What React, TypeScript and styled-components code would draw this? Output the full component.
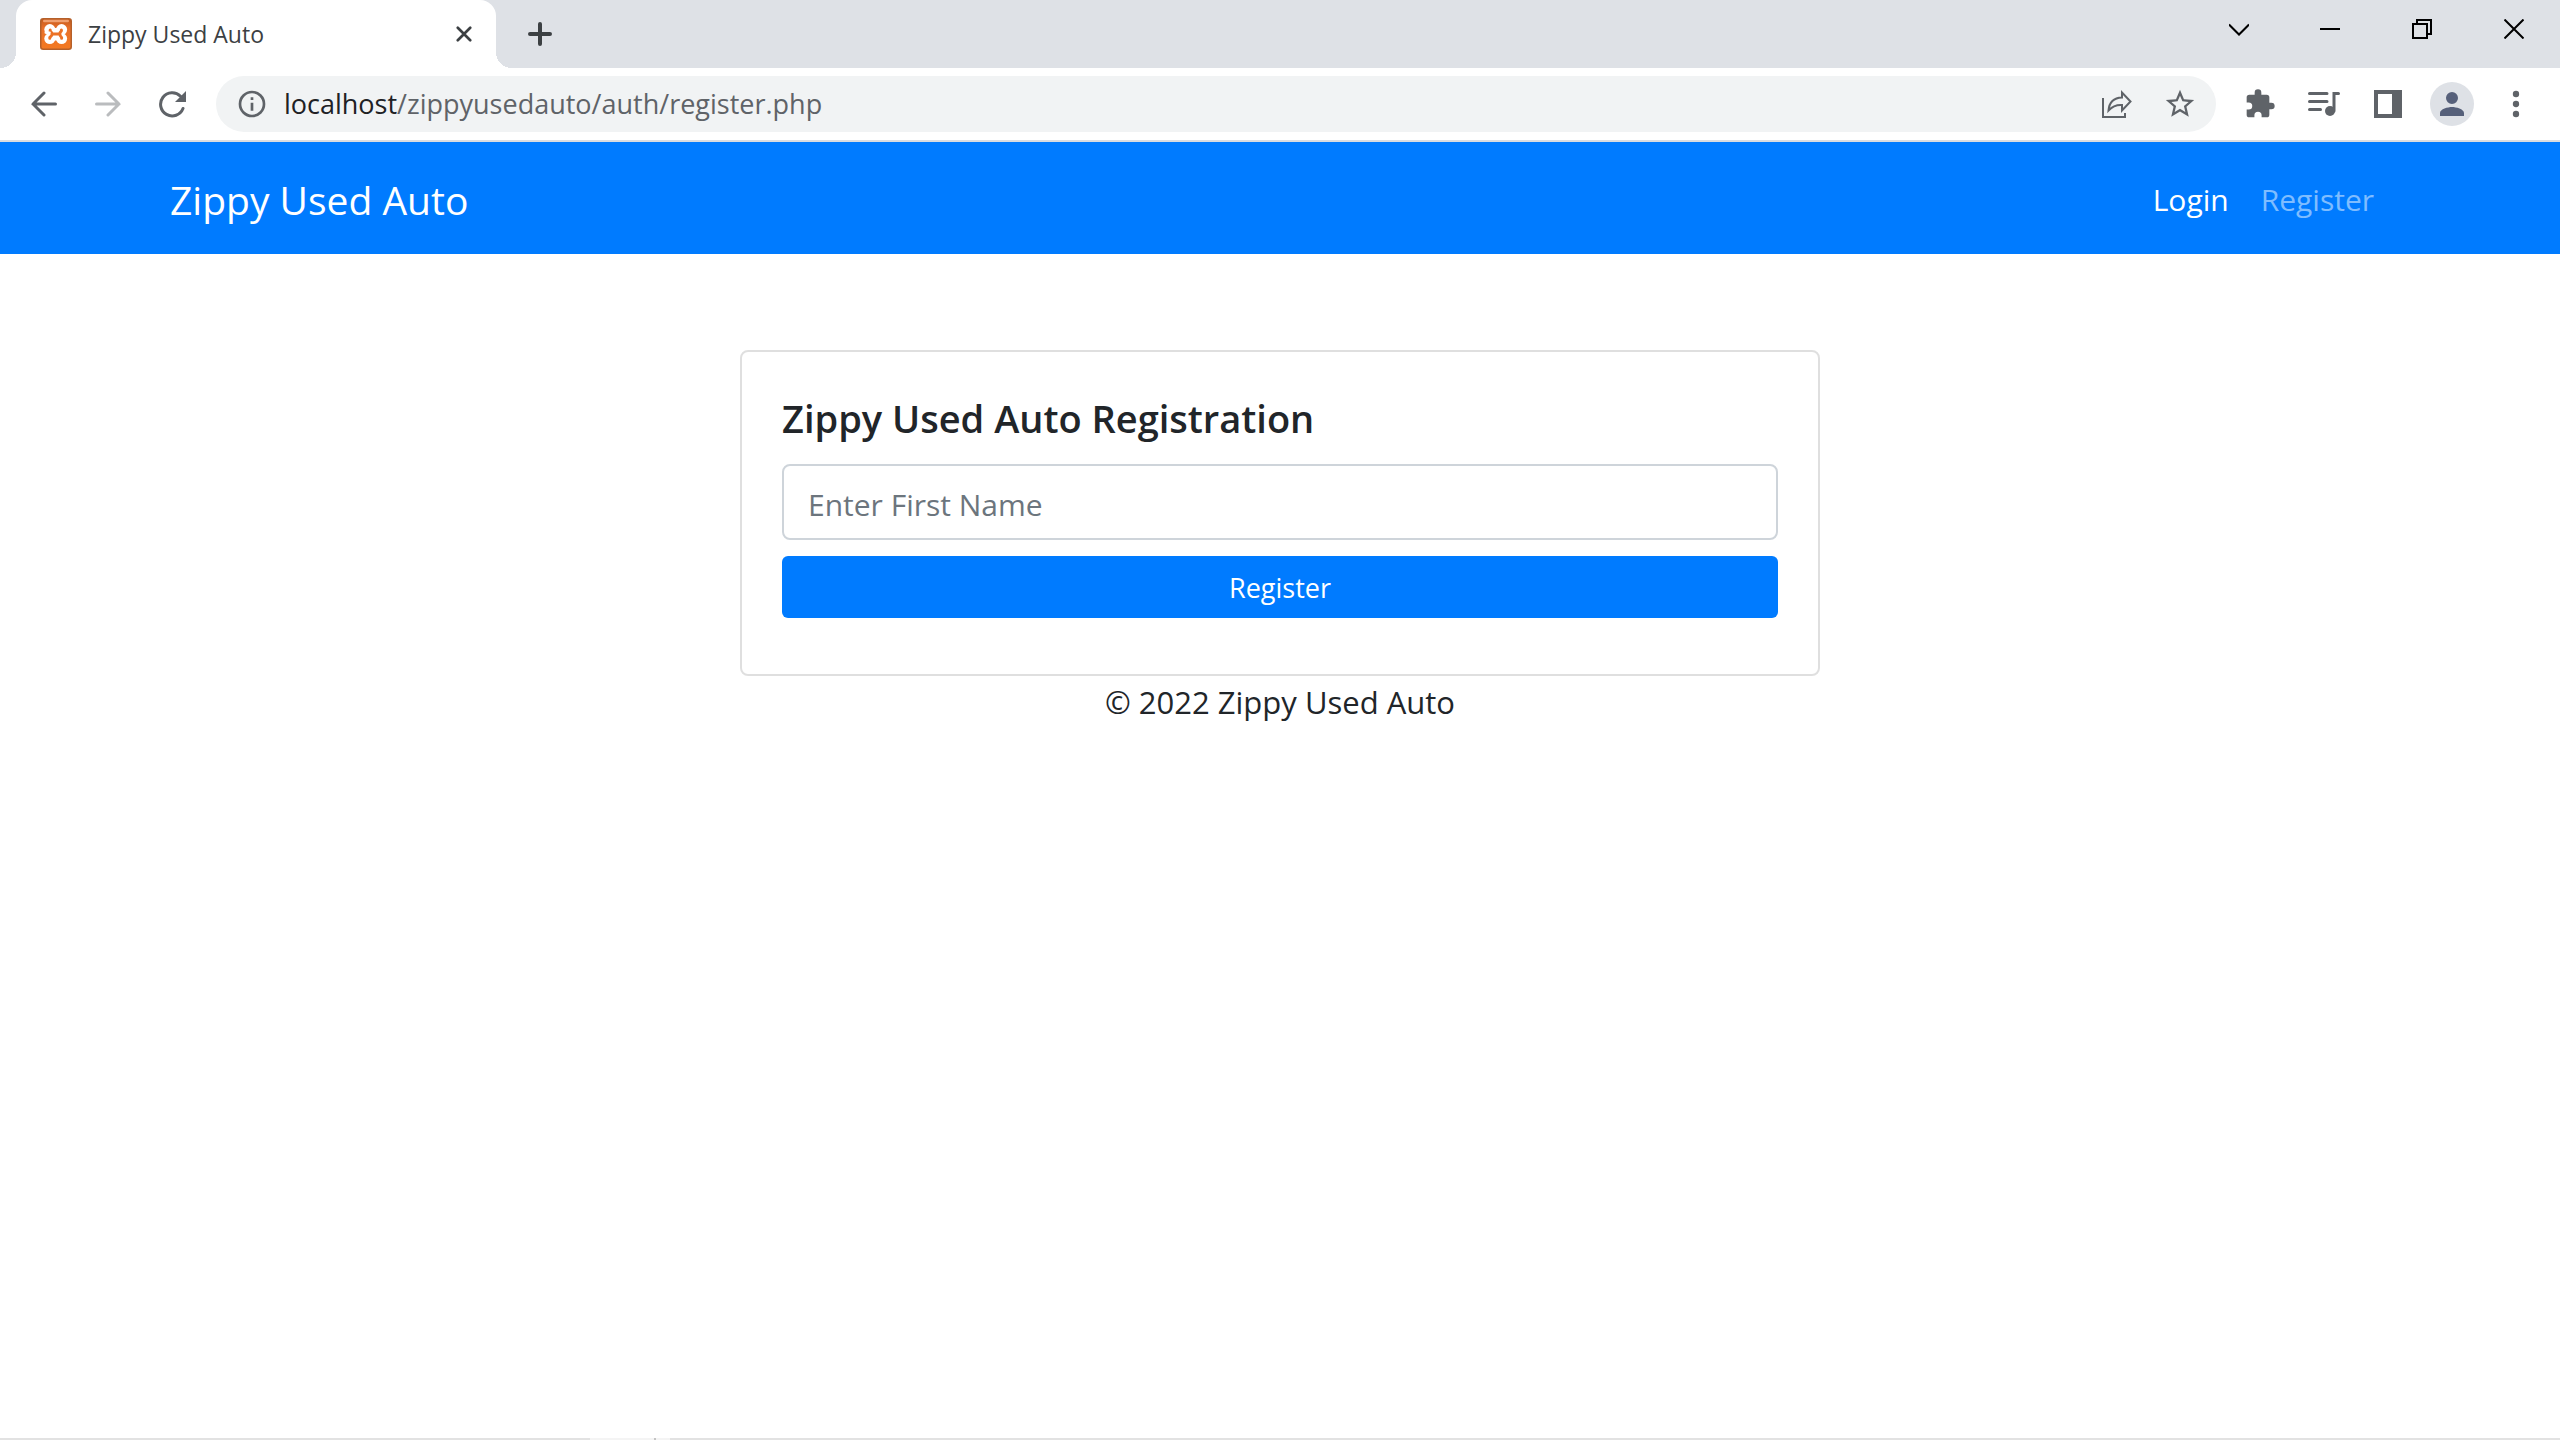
import React from "react";
import styled, { createGlobalStyle } from "styled-components";

const GlobalStyle = createGlobalStyle`
  *, *::before, *::after { box-sizing: border-box; }
  body { margin: 0; background: #fff; color: #212529; font-family: "Open Sans", "Noto Sans", sans-serif; }
  button, input { font: inherit; color: inherit; margin: 0; }
  button { background: none; border: 0; padding: 0; }
  a { color: inherit; text-decoration: none; }
  svg { display: block; }
`;

const Window = styled.div`
  display: flex;
  flex-direction: column;
  min-height: 100vh;
`;

const TabStrip = styled.div`
  display: flex;
  align-items: stretch;
  height: 68px;
  padding-left: 16px;
  background: #dee1e6;
`;

const Tab = styled.div`
  position: relative;
  display: flex;
  align-items: center;
  width: 480px;
  padding: 0 24px;
  gap: 16px;
  background: #fff;
  border-radius: 16px 16px 0 0;
  font-size: 23px;
  color: #3c4043;

  &::before,
  &::after {
    content: "";
    position: absolute;
    bottom: 0;
    width: 16px;
    height: 16px;
  }
  &::before {
    right: 100%;
    background: radial-gradient(circle at 0 0, transparent 16px, #fff 16px);
  }
  &::after {
    left: 100%;
    background: radial-gradient(circle at 100% 0, transparent 16px, #fff 16px);
  }
`;

const TabTitle = styled.span`
  flex: 1;
  line-height: 32px;
`;

const IconButton = styled.button<{ $width?: number; $color?: string }>`
  display: flex;
  align-items: center;
  justify-content: center;
  width: ${(p) => p.$width ?? 64}px;
  color: ${(p) => p.$color ?? "#5f6368"};
`;

const WindowControls = styled.div`
  display: flex;
  height: 58px;
  margin-left: auto;
`;

const Toolbar = styled.div`
  display: flex;
  height: 74px;
  padding: 0 12px;
  background: #fff;
  border-bottom: 2px solid #dadce0;
`;

const AddressBar = styled.div`
  flex: 1;
  display: flex;
  align-items: stretch;
  margin: 8px 12px;
  padding-left: 20px;
  padding-right: 4px;
  border-radius: 28px;
  background: #f1f3f4;
`;

const Url = styled.div`
  flex: 1;
  padding-left: 16px;
  font-size: 27px;
  line-height: 56px;
  color: #5f6368;
`;

const Host = styled.span`
  color: #202124;
`;

const Avatar = styled.span`
  display: flex;
  align-items: center;
  justify-content: center;
  width: 44px;
  height: 44px;
  border-radius: 50%;
  background: #dee1e6;
  color: #56607a;
`;

const Navbar = styled.nav`
  display: flex;
  align-items: center;
  justify-content: space-between;
  height: 112px;
  padding: 4px 170px 0;
  background: #007bff;
  color: #fff;
`;

const Brand = styled.a`
  font-size: 39px;
  line-height: 60px;
`;

const NavLinks = styled.div`
  display: flex;
`;

const NavLink = styled.a<{ $muted?: boolean }>`
  padding: 0 16px;
  font-size: 30px;
  line-height: 48px;
  color: ${(p) => (p.$muted ? "rgba(255, 255, 255, 0.5)" : "#fff")};
`;

const Main = styled.main`
  display: flex;
  flex: 1;
  flex-direction: column;
  align-items: center;
  padding-top: 96px;
`;

const Card = styled.form`
  display: flex;
  flex-direction: column;
  width: 1080px;
  max-width: 100%;
  padding: 40px 40px 56px;
  border: 2px solid rgba(0, 0, 0, 0.125);
  border-radius: 8px;
`;

const CardTitle = styled.h1`
  margin: 0 0 20px;
  font-size: 38px;
  font-weight: 600;
  line-height: 52px;
`;

const TextField = styled.input`
  height: 76px;
  padding: 4px 24px 0;
  border: 2px solid #ced4da;
  border-radius: 8px;
  background: #fff;
  font-size: 30px;
  outline: none;

  &::placeholder {
    color: #6c757d;
    opacity: 1;
  }
`;

const SubmitButton = styled.button`
  height: 62px;
  margin-top: 16px;
  border-radius: 6px;
  background: #007bff;
  color: #fff;
  font-size: 27px;
`;

const Footer = styled.footer`
  padding-top: 2px;
  font-size: 31px;
  line-height: 48px;
`;

const TaskbarEdge = styled.div`
  display: flex;
  height: 2px;
  padding-left: 590px;
  background: #e2e2e2;
`;

const ActiveTask = styled.div`
  width: 80px;
  padding-left: 64px;
  background: #f4f4f4;
`;

const TaskDivider = styled.div`
  width: 2px;
  height: 2px;
  background: #c4c4c4;
`;

const Favicon = () => (
  <svg width="32" height="32" viewBox="0 0 32 32" aria-hidden="true">
    <defs>
      <linearGradient id="tile" x1="0" y1="0" x2="0" y2="1">
        <stop offset="0" stopColor="#c4591c" />
        <stop offset="0.3" stopColor="#e8702a" />
        <stop offset="1" stopColor="#f47a22" />
      </linearGradient>
    </defs>
    <rect x="0.75" y="0.75" width="30.5" height="30.5" rx="2.5" fill="url(#tile)" stroke="#b5602a" strokeWidth="1.5" />
    <rect x="3" y="1.8" width="26" height="2.4" rx="1.2" fill="#f0a070" />
    <g fill="#fff">
      <circle cx="9.8" cy="11.6" r="5.5" />
      <circle cx="21.6" cy="11.6" r="5.5" />
      <circle cx="9.8" cy="20.6" r="5.5" />
      <circle cx="21.6" cy="20.6" r="5.5" />
      <rect x="10" y="10" width="12" height="12.5" />
    </g>
    <path
      d="M10.200 12v1.200q2 1.300 2 2.900t-2.400 3.400v.8M21.400 12v.8q-1.600 1.500-1.600 3.300t1.800 3.400v.8M12 16.100h8"
      fill="none"
      stroke="#ec7226"
      strokeWidth="3"
      strokeLinecap="round"
      strokeLinejoin="round"
    />
    <path d="M5.500 14.800l4.300-.2" stroke="#fff" strokeWidth="2" strokeLinecap="round" />
  </svg>
);

const Glyph = ({ size = 32, children }: { size?: number; children: React.ReactNode }) => (
  <svg width={size} height={size} viewBox="0 0 24 24" fill="currentColor" aria-hidden="true">
    {children}
  </svg>
);

type LinesProps = { size: number; width?: number; round?: boolean; d: string; children?: React.ReactNode };

const Lines = ({ size, width = 2, round, d, children }: LinesProps) => (
  <svg
    width={size}
    height={size}
    viewBox={`0 0 ${size} ${size}`}
    fill="none"
    stroke="currentColor"
    strokeWidth={width}
    strokeLinecap={round ? "round" : "butt"}
    aria-hidden="true"
  >
    <path d={d} />
    {children}
  </svg>
);

export default function App() {
  return (
    <Window>
      <GlobalStyle />
      <TabStrip>
        <Tab>
          <Favicon />
          <TabTitle>Zippy Used Auto</TabTitle>
          <IconButton $width={16} $color="#3c4043" aria-label="Close tab">
            <Lines size={18} width={3} round d="M2 2l14 14M16 2L2 16" />
          </IconButton>
        </Tab>
        <IconButton $width={88} $color="#3c4043" aria-label="New tab">
          <Lines size={24} width={4} round d="M12 2v20M2 12h20" />
        </IconButton>
        <WindowControls>
          <IconButton $width={90} $color="#000" aria-label="Search tabs">
            <Lines size={20} d="M0 5.500l10 10l10-10" />
          </IconButton>
          <IconButton $width={92} $color="#000" aria-label="Minimize">
            <Lines size={20} d="M0 10h20" />
          </IconButton>
          <IconButton $width={92} $color="#000" aria-label="Restore">
            <Lines size={20} d="M1 5h14v14H1zM5 5V1h14v14h-4" />
          </IconButton>
          <IconButton $width={92} $color="#000" aria-label="Close window">
            <Lines size={20} d="M.5.5l19 19M19.500.5l-19 19" />
          </IconButton>
        </WindowControls>
      </TabStrip>
      <Toolbar>
        <IconButton aria-label="Back">
          <Lines size={26} width={3} round d="M24.500 13H2M13 2L2 13l11 11" />
        </IconButton>
        <IconButton $color="#babcbe" aria-label="Forward">
          <Lines size={26} width={3} round d="M1.500 13H24M13 2l11 11l-11 11" />
        </IconButton>
        <IconButton aria-label="Reload">
          <Lines size={28} width={3} round d="M25 18.500A11.600 11.600 0 1 1 22.500 6.200">
            <path d="M28 1v11H17z" fill="currentColor" stroke="none" />
          </Lines>
        </IconButton>
        <AddressBar>
          <IconButton $width={32} aria-label="View site information">
            <Glyph size={32}>
              <path d="M11 7h2v2h-2zm0 4h2v6h-2zm1-9a10 10 0 1 0 0 20a10 10 0 0 0 0-20zm0 18a8 8 0 1 1 0-16a8 8 0 0 1 0 16z" />
            </Glyph>
          </IconButton>
          <Url>
            <Host>localhost</Host>/zippyusedauto/auth/register.php
          </Url>
          <IconButton aria-label="Share">
            <Lines size={32} d="M3 10v19h22v-4M8.500 22.500q1-12.500 13.500-13V4.500l8.500 9l-8.500 9v-5.500q-8-.5-13.500 5.500z" />
          </IconButton>
          <IconButton aria-label="Bookmark">
            <Glyph size={34}>
              <path d="M22 9.240l-7.190-.62L12 2L9.190 8.630L2 9.240l5.460 4.730L5.820 21L12 17.270L18.180 21l-1.630-7.030zM12 15.400l-3.760 2.270l1-4.280l-3.320-2.880l4.380-.38L12 6.100l1.710 4.040l4.380.38l-3.320 2.880l1 4.280z" />
            </Glyph>
          </IconButton>
        </AddressBar>
        <IconButton aria-label="Extensions">
          <Glyph size={32}>
            <path d="M20.500 11H19V7a2 2 0 0 0-2-2h-4V3.500a2.500 2.500 0 0 0-5 0V5H4a2 2 0 0 0-2 2v3.800h1.500a2.700 2.700 0 0 1 0 5.400H2V20a2 2 0 0 0 2 2h3.800v-1.500a2.700 2.700 0 0 1 5.400 0V22H17a2 2 0 0 0 2-2v-4h1.500a2.500 2.500 0 0 0 0-5z" />
          </Glyph>
        </IconButton>
        <IconButton aria-label="Media controls">
          <Lines size={32} width={3} round d="M1.500 5.500h17.500M1.500 13.500h17.500M1.500 21.500h11M30.500 5.500h-4.500v17.500">
            <circle cx="22" cy="23" r="5" fill="currentColor" stroke="none" />
          </Lines>
        </IconButton>
        <IconButton aria-label="Side panel">
          <Lines size={28} width={4} d="M2 2h24v24H2zM20 2v24M24 2v24" />
        </IconButton>
        <IconButton aria-label="Profile">
          <Avatar>
            <Glyph size={36}>
              <path d="M12 12a4 4 0 1 0 0-8a4 4 0 0 0 0 8zm0 2c-2.670 0-8 1.340-8 4v2h16v-2c0-2.660-5.330-4-8-4z" />
            </Glyph>
          </Avatar>
        </IconButton>
        <IconButton aria-label="Menu">
          <Glyph size={38}>
            <circle cx="12" cy="5.700" r="2" />
            <circle cx="12" cy="12" r="2" />
            <circle cx="12" cy="18.300" r="2" />
          </Glyph>
        </IconButton>
      </Toolbar>
      <Navbar>
        <Brand href="#">Zippy Used Auto</Brand>
        <NavLinks>
          <NavLink href="#login">Login</NavLink>
          <NavLink href="#register" $muted>
            Register
          </NavLink>
        </NavLinks>
      </Navbar>
      <Main>
        <Card onSubmit={(e) => e.preventDefault()}>
          <CardTitle>Zippy Used Auto Registration</CardTitle>
          <TextField type="text" aria-label="First name" placeholder="Enter First Name" />
          <SubmitButton type="submit">Register</SubmitButton>
        </Card>
        <Footer>© 2022 Zippy Used Auto</Footer>
      </Main>
      <TaskbarEdge>
        <ActiveTask>
          <TaskDivider />
        </ActiveTask>
      </TaskbarEdge>
    </Window>
  );
}
